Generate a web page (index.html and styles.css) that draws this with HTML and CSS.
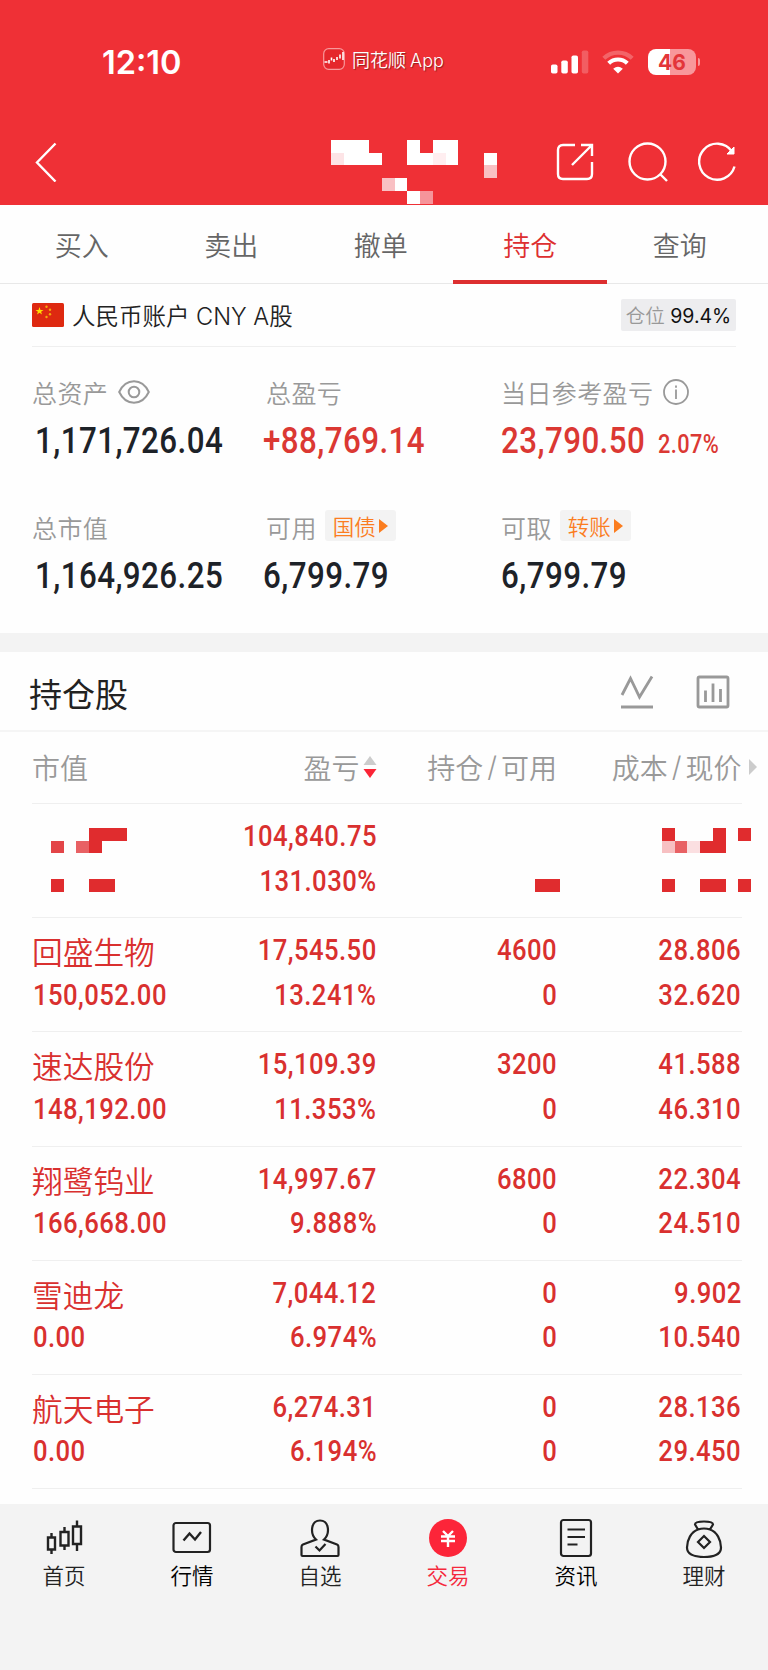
FILE: index.html
```html
<!DOCTYPE html>
<html lang="zh-CN">
<head>
  <meta charset="UTF-8">
  <title>持仓</title>
  <link rel="stylesheet" href="styles.css">
</head>
<body>

  <header class="top">
    <div class="status">
      <span class="time">12:10</span>
      <div class="app">
        <svg width="22" height="22" viewBox="0 0 22 22">
          <rect x=".7" y=".7" width="20.6" height="20.6" rx="5" fill="#e5262c" stroke="#f8989b" stroke-width="1.2"/>
          <path d="M1.500 14h3M6 12v3.500M8.500 9.500v3M11 11v3M14 9v3M17 6.500v4M20 4v8" fill="none" stroke="#fff" stroke-width="1.6"/>
        </svg>
        <span>同花顺 App</span>
      </div>
      <svg class="signal" width="38" height="24" viewBox="0 0 38 24" fill="#fff">
        <rect x="0" y="14.500" width="6.500" height="9" rx="1.800"/>
        <rect x="10.300" y="10.500" width="6.500" height="13" rx="1.800"/>
        <rect x="20.500" y="5.500" width="6.500" height="18" rx="1.800"/>
        <rect x="30.800" y=".5" width="6.500" height="23" rx="1.800" opacity=".22"/>
      </svg>
      <svg class="wifi" width="32" height="24" viewBox="0 0 32 24" fill="none" stroke="#fff" stroke-width="4.200">
        <path d="M1.800 8.300a20.500 20.500 0 0 1 28.400 0" opacity=".25"/>
        <path d="M6.700 13.200a13.500 13.500 0 0 1 18.600 0"/>
        <path d="M16 23.500l-4.800-4.800q4.800-3.800 9.600 0z" fill="#fff" stroke="none"/>
      </svg>
      <div class="battery"><b>46</b></div>
    </div>
    <div class="bar">
      <svg class="back" width="22" height="40" viewBox="0 0 22 40" fill="none" stroke="#fff" stroke-width="2.400">
        <path d="M20.500 1.500L2 20.500l18.500 19"/>
      </svg>
      <svg class="blocks title-blocks" width="165.500" height="63.700" viewBox="0 0 13 5" fill="#fff" shape-rendering="crispEdges">
        <path d="M0 0h3v1h1v1H0zM6 0h1v1h1V0h2v2H6zM12 1h1v1h-1zM5 3h1v1H5zM6 4h1v1H6z"/>
        <path d="M0 1h1v1H0z" fill="#fde4e6"/>
        <path d="M8 1h1v1H8z" fill="#ffeef0"/>
        <path d="M12 2h1v1h-1zM4 3h1v1H4z" fill="#f9c0c3"/>
        <path d="M7 4h1v1H7z" fill="#f6949a"/>
      </svg>
      <svg class="share" width="38" height="38" viewBox="0 0 38 38" fill="none" stroke="#fff" stroke-width="2.400">
        <path d="M19 2H7Q2 2 2 7v24q0 5 5 5h24q5 0 5-5V19M16 22L35.500 2.500M25 2h11v11"/>
      </svg>
      <svg class="search" width="40" height="40" viewBox="0 0 40 40" fill="none" stroke="#fff" stroke-width="2.400">
        <circle cx="19.500" cy="19.500" r="18"/>
        <path d="M32 32l7 7"/>
      </svg>
      <svg class="refresh" width="40" height="40" viewBox="0 0 40 40" fill="none" stroke="#fff" stroke-width="2.400">
        <path d="M36.500 24.500A18 18 0 1 1 34 9.500"/>
        <path d="M36 5v7h-7z" fill="#fff" stroke-width="1"/>
      </svg>
    </div>
  </header>

  <nav class="tabs">
    <a>买入</a>
    <a>卖出</a>
    <a>撤单</a>
    <a class="active">持仓</a>
    <a>查询</a>
  </nav>

  <section class="account">
    <svg class="flag" width="32" height="24" viewBox="0 0 32 24">
      <rect width="32" height="24" rx="1.500" fill="#de2910"/>
      <path d="M7.500 4l1 2.900h3l-2.400 1.800.9 2.900-2.500-1.800L5 11.600l.9-2.900L3.500 6.900h3z" fill="#ffde00"/>
      <g fill="#f5a80c">
        <circle cx="14.500" cy="3.800" r="1.200"/><circle cx="18" cy="6.800" r="1.200"/>
        <circle cx="18" cy="11.200" r="1.200"/><circle cx="14.500" cy="14" r="1.200"/>
      </g>
    </svg>
    <span class="name">人民币账户 CNY A股</span>
    <span class="position">仓位 <b>99.4%</b></span>
  </section>

  <section class="summary">
    <div class="item">
      <div class="label">总资产
        <svg class="eye" width="32" height="24" viewBox="0 0 32 24" fill="none" stroke="#999" stroke-width="2">
          <path d="M1.200 12C8-2.300 24-2.300 30.800 12C24 26.300 8 26.300 1.200 12z"/>
          <circle cx="16" cy="12" r="5.300"/>
        </svg>
      </div>
      <div class="value in"><span class="num">1,171,726.04</span></div>
    </div>
    <div class="item">
      <div class="label">总盈亏</div>
      <div class="value red"><span class="num">+88,769.14</span></div>
    </div>
    <div class="item">
      <div class="label">当日参考盈亏
        <svg class="info" width="26" height="26" viewBox="0 0 26 26" fill="none" stroke="#999" stroke-width="1.800">
          <circle cx="13" cy="13" r="12"/>
          <path d="M13 10.500v9.500M13 6.500v2.200"/>
        </svg>
      </div>
      <div class="value last red"><span class="num">23,790.50</span><span class="num small">2.07%</span></div>
    </div>
    <div class="item">
      <div class="label">总市值</div>
      <div class="value in"><span class="num">1,164,926.25</span></div>
    </div>
    <div class="item">
      <div class="label">可用 <span class="tag">国债<i></i></span></div>
      <div class="value"><span class="num">6,799.79</span></div>
    </div>
    <div class="item">
      <div class="label">可取 <span class="tag">转账<i></i></span></div>
      <div class="value last"><span class="num">6,799.79</span></div>
    </div>
  </section>

  <section class="holdings">
    <div class="heading">
      <h2>持仓股</h2>
      <svg width="34" height="34" viewBox="0 0 34 34" fill="none" stroke="#999" stroke-width="2.800">
        <path d="M2 20L10.500 3.500l9 18.500L32 1.500M1 32h32"/>
      </svg>
      <svg width="34" height="34" viewBox="0 0 34 34" fill="none" stroke="#999" stroke-width="2.800">
        <rect x="2" y="2" width="30" height="30" rx="1.500"/>
        <path d="M9.500 15.500V27M17 8.500V27M24.500 14V27"/>
      </svg>
    </div>

    <div class="row head">
      <div>市值</div>
      <div>盈亏<svg class="sort" width="14" height="24" viewBox="0 0 14 24"><path d="M7 1l6.500 9H.5z" fill="#ccc"/><path d="M7 23l6.500-9H.5z" fill="#fb2436"/></svg></div>
      <div>持仓<em>/</em>可用</div>
      <div>成本<em>/</em>现价<i class="more"></i></div>
    </div>

    <div class="row">
      <div>
        <svg class="blocks left-blocks" width="76.400" height="63.700" viewBox="0 0 6 5" fill="#e02c2e" shape-rendering="crispEdges">
          <path d="M3 0h3v1H4v1H3zM0 4h1v1H0zM3 4h2v1H3z"/>
          <path d="M0 1h1v1H0z" fill="#e34548"/>
          <path d="M2 1h1v1H2z" fill="#e86164"/>
        </svg>
      </div>
      <div><span class="num">104,840.75</span><span class="num">131.030%</span></div>
      <div>
        <svg class="blocks mid-blocks" width="25.500" height="12.700" viewBox="0 0 2 1" fill="#e02c2e" shape-rendering="crispEdges">
          <path d="M0 0h2v1H0z"/>
        </svg>
      </div>
      <div>
        <svg class="blocks right-blocks" width="89.100" height="63.700" viewBox="0 0 7 5" fill="#e02c2e" shape-rendering="crispEdges">
          <path d="M0 0h1v1H0zM4 0h1v2H3V1h1zM6 0h1v1H6zM0 4h1v1H0zM3 4h2v1H3zM6 4h1v1H6z"/>
          <path d="M0 1h1v1H0z" fill="#f7c0c2"/>
          <path d="M1 1h1v1H1z" fill="#e86164"/>
          <path d="M2 1h1v1H2z" fill="#fbdfe1"/>
        </svg>
      </div>
    </div>

    <div class="row">
      <div><span class="stock">回盛生物</span><span class="num">150,052.00</span></div>
      <div><span class="num">17,545.50</span><span class="num">13.241%</span></div>
      <div><span class="num">4600</span><span class="num">0</span></div>
      <div><span class="num">28.806</span><span class="num">32.620</span></div>
    </div>
    <div class="row">
      <div><span class="stock">速达股份</span><span class="num">148,192.00</span></div>
      <div><span class="num">15,109.39</span><span class="num">11.353%</span></div>
      <div><span class="num">3200</span><span class="num">0</span></div>
      <div><span class="num">41.588</span><span class="num">46.310</span></div>
    </div>
    <div class="row">
      <div><span class="stock">翔鹭钨业</span><span class="num">166,668.00</span></div>
      <div><span class="num">14,997.67</span><span class="num">9.888%</span></div>
      <div><span class="num">6800</span><span class="num">0</span></div>
      <div><span class="num">22.304</span><span class="num">24.510</span></div>
    </div>
    <div class="row">
      <div><span class="stock">雪迪龙</span><span class="num">0.00</span></div>
      <div><span class="num">7,044.12</span><span class="num">6.974%</span></div>
      <div><span class="num">0</span><span class="num">0</span></div>
      <div><span class="num">9.902</span><span class="num">10.540</span></div>
    </div>
    <div class="row">
      <div><span class="stock">航天电子</span><span class="num">0.00</span></div>
      <div><span class="num">6,274.31</span><span class="num">6.194%</span></div>
      <div><span class="num">0</span><span class="num">0</span></div>
      <div><span class="num">28.136</span><span class="num">29.450</span></div>
    </div>
  </section>

  <footer class="menu">
    <a>
      <svg width="40" height="40" viewBox="0 0 40 40" fill="none" stroke="#222" stroke-width="2.400">
        <path d="M4 19.500h7v12H4zM7.500 15v4.500M7.500 31.500V36M16.500 14h8v13.500h-8zM20.500 9v5M20.500 27.500V32M29 8.500h8v17.500h-8zM33 2.500v6M33 26v7"/>
      </svg>
      <span>首页</span>
    </a>
    <a class="dark">
      <svg width="40" height="40" viewBox="0 0 40 40" fill="none" stroke="#222" stroke-width="2.200">
        <rect x="1.500" y="5" width="36.500" height="29" rx="2.500"/>
        <path d="M11.500 22.500l6-7 5.500 6 6-7.500" stroke-width="2.400"/>
      </svg>
      <span>行情</span>
    </a>
    <a>
      <svg width="40" height="40" viewBox="0 0 40 40" fill="none" stroke="#222" stroke-width="2.200">
        <path d="M16 21.500C10 16 10.500 2.500 20 2.500S30 16 24 21.500L37 26.500q1.500.7 1.500 2.500v8q0 1-1 1h-35q-1 0-1-1v-8q0-1.800 1.500-2.500z"/>
        <path d="M15.500 28.500l4 4 6-6.500"/>
      </svg>
      <span>自选</span>
    </a>
    <a class="current">
      <svg width="40" height="40" viewBox="0 0 40 40" fill="none" stroke="#fff" stroke-width="2.400">
        <circle cx="20" cy="20" r="19" fill="#fc2539" stroke="none"/>
        <path d="M15 13l5 5 5-5M20 18v11M13 18.500h14M13 23h14"/>
      </svg>
      <span>交易</span>
    </a>
    <a class="dark">
      <svg width="40" height="40" viewBox="0 0 40 40" fill="none" stroke="#222" stroke-width="2.200">
        <rect x="5" y="2" width="30" height="36" rx="2.500"/>
        <path d="M11.500 11.500h17.500M11.500 19h17.500M11.500 26.500h10"/>
      </svg>
      <span>资讯</span>
    </a>
    <a>
      <svg width="40" height="40" viewBox="0 0 40 40" fill="none" stroke="#222" stroke-width="2.200">
        <path d="M14 11.500L11 6.500Q11 3.500 20 3.500t9 3l-3 5C33 14 37 22 37 29.500Q37 39 20 39T3 29.500C3 22 7 14 14 11.500Q20 9.500 26 11.500"/>
        <path d="M20 18l6 6-6 6-6-6z"/>
      </svg>
      <span>理财</span>
    </a>
  </footer>

</body>
</html>
```
FILE: styles.css
```css
* {
  box-sizing: border-box;
}

body {
  margin: 0;
  width: 768px;
  height: 1670px;
  font-family: Inter, "Noto Sans CJK SC", sans-serif;
  font-weight: 350;
  background-color: #fefefe;
  color: #222;
  overflow: hidden;
}

svg {
  display: block;
  flex: none;
}

em, i {
  font-style: normal;
}

/* red header */

.top {
  height: 205px;
  background-color: #ef3036;
  color: #fff;
}

.status {
  display: flex;
  align-items: center;
  height: 124px;
  padding-left: 102px;
}

.time {
  width: 221px;
  font-size: 32.500px;
  font-weight: 600;
}

.app {
  display: flex;
  align-items: center;
  gap: 7px;
  width: 228px;
  margin-top: -7px;
  font-size: 18px;
  word-spacing: -1px;
  white-space: nowrap;
  text-shadow: 1px 1px 1px rgba(0,0,0,0.4);
}

.wifi {
  margin-left: 13px;
}

.battery {
  position: relative;
  width: 48px;
  height: 26px;
  margin-left: 14px;
  border-radius: 8px;
  background: linear-gradient(90deg, #fff 46%, #f8979b 46%);
  color: #e3353a;
  font-size: 21px;
  line-height: 27px;
  text-align: center;
}

.battery::after {
  content: "";
  position: absolute;
  left: 50px;
  top: 9px;
  width: 2px;
  height: 8px;
  border-radius: 0 4px 4px 0;
  background-color: #f8979b;
}

.bar {
  display: flex;
  align-items: center;
  height: 75px;
  padding-left: 35px;
}

.title-blocks {
  align-self: flex-start;
  margin: 16px 59px 0 274px;
}

.search {
  margin-left: 34px;
}

.refresh {
  margin-left: 30px;
}

/* tabs */

.tabs {
  display: flex;
  height: 79px;
  padding: 0 13px 0 7px;
  border-bottom: 1px solid #e8e8e8;
}

.tabs a {
  width: 149.500px;
  height: 79px;
  line-height: 83px;
  text-align: center;
  font-size: 27px;
  color: #666;
}

.tabs .active {
  width: 154px;
  margin: 0 -2.250px;
  color: #dd2f30;
  background: linear-gradient(#dd2f30, #dd2f30) bottom / 154px 4px no-repeat;
}

/* account */

.account {
  display: flex;
  align-items: center;
  height: 63px;
  margin: 0 32px;
  border-bottom: 1px solid #efefef;
}

.account .name {
  margin-left: 8px;
  font-size: 23.500px;
}

.position {
  width: 115px;
  height: 32px;
  margin-left: auto;
  border-radius: 2px;
  background-color: #ededef;
  color: #999;
  font-size: 19.500px;
  line-height: 34px;
  text-align: center;
  white-space: nowrap;
}

.position b {
  font-weight: 400;
  color: #111;
}

.summary {
  display: grid;
  grid-template-columns: 234px 235px 1fr;
  grid-template-rows: 134.500px 135px;
  height: 286px;
  padding: 25px 0 0 32px;
}

.label {
  display: flex;
  align-items: center;
  height: 40px;
  font-size: 25px;
  letter-spacing: .4px;
  color: #999;
  white-space: nowrap;
}

.eye, .info {
  margin-left: 10px;
}

.tag {
  display: flex;
  align-items: center;
  height: 31px;
  margin: -2px 0 0 8px;
  padding: 0 8px;
  border-radius: 3px;
  background-color: #f3f3f3;
  color: #fb7d1f;
  font-size: 21.500px;
  letter-spacing: 0;
}

.tag i {
  margin-left: 3px;
  border-left: 9px solid #fb7d1f;
  border-top: 7px solid transparent;
  border-bottom: 7px solid transparent;
}

.value {
  height: 54px;
  margin-top: 2px;
  margin-left: -3px;
  color: #1d2228;
}

.value.in {
  margin-left: 3px;
}

.value.last {
  margin-left: 0;
}

.value.red {
  color: #db3833;
}

/* narrow figures */

.num {
  display: inline-block;
  font-family: Roboto, sans-serif;
  font-size: 29.500px;
  font-weight: 500;
  letter-spacing: .5px;
  white-space: nowrap;
  transform: scaleX(.87);
  transform-origin: right;
}

.value .num {
  font-size: 36px;
  line-height: 54px;
  transform-origin: left;
}

.value .small {
  margin-left: -9px;
  font-size: 25px;
}

/* holdings */

.holdings {
  height: 871px;
  border-top: 19px solid #f3f3f3;
}

.heading {
  display: flex;
  align-items: center;
  gap: 42px;
  height: 80px;
  padding: 1px 38px 0 29px;
  border-bottom: 2px solid #f5f5f5;
}

h2 {
  flex: 1;
  margin: 2px 0 0;
  font-size: 33px;
  font-weight: 400;
}

.row {
  display: grid;
  grid-template-columns: 150px 194.500px 180.500px 184.500px;
  height: 114.200px;
  margin: 0 26px 0 32px;
  padding-top: 10px;
  border-bottom: 1px solid #efefef;
  color: #d9302f;
}

.row div {
  display: flex;
  flex-direction: column;
  align-items: flex-end;
}

.row div:first-child {
  align-items: flex-start;
}

.row .num {
  line-height: 44.500px;
}

.row div:first-child .num {
  margin-left: 1px;
  transform-origin: left;
}

.row .stock {
  height: 44.500px;
  padding-top: 3px;
  font-size: 30.700px;
  line-height: 44px;
}

.head {
  height: 72px;
  padding: 0 0 2px;
  font-size: 28px;
  color: #999;
}

.row.head div {
  position: relative;
  flex-direction: row;
  align-items: center;
  justify-content: flex-end;
}

.row.head div:first-child {
  justify-content: flex-start;
}

.head em {
  margin: 0 4px;
}

.sort {
  margin-left: 3px;
}

.more {
  position: absolute;
  left: 192px;
  border-left: 8px solid #ccc;
  border-top: 8px solid transparent;
  border-bottom: 8px solid transparent;
}

.left-blocks {
  margin: 14px 0 0 19px;
}

.mid-blocks {
  margin: 65px -3px 0 0;
}

.right-blocks {
  margin: 14px -10px 0 0;
}

/* bottom menu */

.menu {
  display: flex;
  height: 167px;
  padding-top: 14px;
  background-color: #f3f3f3;
}

.menu a {
  flex: 1;
  display: flex;
  flex-direction: column;
  align-items: center;
  font-size: 21.500px;
  line-height: 36px;
}

.menu .dark {
  color: #000;
}

.menu .current {
  color: #f5293c;
}
```
